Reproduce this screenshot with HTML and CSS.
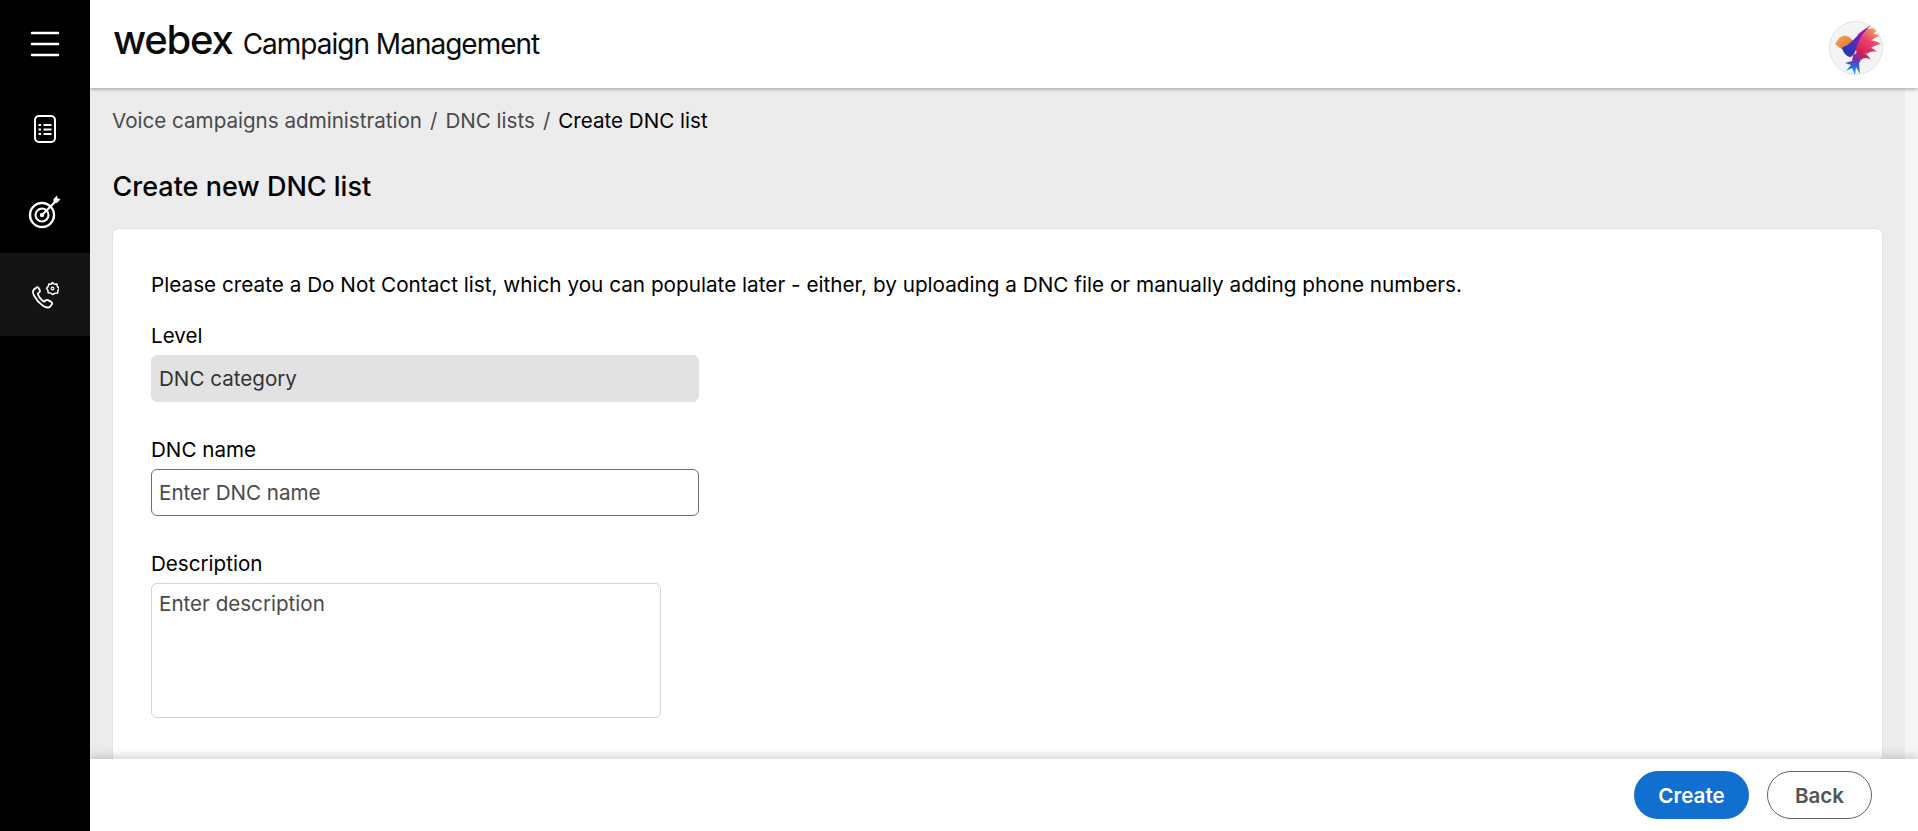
FILE: index.html
```html
<!DOCTYPE html>
<html>
<head>
    <title>Webex Campaign Management</title>
    <link rel="stylesheet" href="styles.css">
</head>
<body>
    <div class="app">
        <nav class="sidebar">
            <div class="nav-item nav-menu">
                <svg width="30" height="28" viewBox="0 0 30 28"><path d="M2 3h26M2 14h26M2 25h26" stroke="#fff" stroke-width="2.500" stroke-linecap="round" fill="none"/></svg>
            </div>
            <div class="nav-item">
                <svg width="24" height="30" viewBox="0 0 24 30" fill="none" stroke="#fff"><rect x="2" y="2" width="20" height="26" rx="4" stroke-width="2"/><path d="M10.500 11h8M10.500 15.500h8M10.500 20h8M5.500 11h2.500M5.500 15.500h2.500M5.500 20h2.500" stroke-width="2"/></svg>
            </div>
            <div class="nav-item">
                <svg width="34" height="34" viewBox="0 0 34 34" fill="none" stroke="#fff"><circle cx="14" cy="20" r="12" stroke-width="2.400"/><circle cx="14" cy="20" r="6.500" stroke-width="2.100"/><path d="M14 20 27 7" stroke-width="2.200"/><path d="M25.500 8V4l3.500-3.500.6 3 3 .6L29 8z" fill="#fff" stroke="none"/><circle cx="14" cy="20" r="2.200" fill="#fff" stroke="none"/></svg>
            </div>
            <div class="nav-item nav-active">
                <svg width="28" height="28" viewBox="0 0 28 28" fill="none" stroke="#fff"><path d="M5.500 6.500 3 8.500c-1.500 1.300-1.300 3.500.3 6.500 2.200 4.200 5 7.300 8.700 9.800 2.700 1.700 5.300 2.300 7 .9l1.800-2.200c.7-1 .4-2-.6-2.600l-3.200-1.800c-1-.5-1.800-.4-2.500.4l-1.200 1.200c-3-1.700-5.300-4.500-6.500-8l1.400-1.300c.7-.7.9-1.500.5-2.500L7.500 7c-.4-1-1.200-1.100-2-.5z" stroke-width="1.800" stroke-linejoin="round"/><path d="m21.500 1.500 1.900 1.700 2.500-.1.500 2.500 1.800 1.700-1.300 2.200-.2 2.500-2.500.2-2.700 1.300-2.100-1.500-2.300-.2-.2-2.500-1.400-2.100 1.800-1.800.5-2.400 2.400.2z" stroke-width="1.500" stroke-linejoin="round"/><circle cx="21.500" cy="7.500" r="1.400" stroke-width="1.200"/></svg>
            </div>
        </nav>
        <div class="main">
            <header class="topbar">
                <div class="brand">
                    <span class="brand-logo">webex</span>
                    <span class="brand-name">Campaign Management</span>
                </div>
                <div class="avatar">
                    <svg width="54" height="54" viewBox="0 0 54 54">
                        <defs>
                            <linearGradient id="stroke" gradientUnits="userSpaceOnUse" x1="16" y1="34" x2="42" y2="5"><stop offset="0" stop-color="#1f3bb0"/><stop offset=".5" stop-color="#5a26c4"/><stop offset="1" stop-color="#b520b4"/></linearGradient>
                            <linearGradient id="head" x1="0" y1="0" x2="1" y2="1"><stop offset="0" stop-color="#f6b04c"/><stop offset="1" stop-color="#e0663a"/></linearGradient>
                            <linearGradient id="feather" gradientUnits="userSpaceOnUse" x1="28" y1="36" x2="48" y2="7"><stop offset="0" stop-color="#c4174c"/><stop offset=".55" stop-color="#ea3f70"/><stop offset="1" stop-color="#f6b24a"/></linearGradient>
                            <linearGradient id="tail" gradientUnits="userSpaceOnUse" x1="28" y1="30" x2="24" y2="53"><stop offset="0" stop-color="#cf1f5a"/><stop offset=".4" stop-color="#6a34b8"/><stop offset=".7" stop-color="#2a6fd0"/><stop offset="1" stop-color="#22a6e4"/></linearGradient>
                            <clipPath id="disc"><circle cx="27" cy="27" r="26.500"/></clipPath>
                        </defs>
                        <circle cx="27" cy="27" r="26.500" fill="#f4f4f6" stroke="#e2e2e2"/>
                        <g clip-path="url(#disc)">
                            <path d="M28 14C34 8 42 6 49 8 46 11 44 13 42 15z" fill="url(#feather)"/>
                            <path d="M30 18C36 12 44 11 50 15 46 16 44 18 42 20z" fill="url(#feather)"/>
                            <path d="M29 24C36 18 44 18 52 23 47 24 44 25 42 27z" fill="url(#feather)"/>
                            <path d="M28 28C35 24 42 25 48 31 43 30 40 31 38 33z" fill="url(#feather)"/>
                            <path d="M27 31C33 29 38 32 42 39 37 36 34 37 32 39z" fill="url(#feather)"/>
                            <path d="M24 20C30 14 36 13 42 15L40 27 30 38z" fill="url(#feather)"/>
                            <path d="M24 34 31 30C33 36 32 40 30 42L31 53 27 46 26 54 23 47 17 50 22 44 16 42 23 40z" fill="url(#tail)"/>
                            <path d="M6 23C8 21 9 16 14 15 18 14 22 17 24 20L20 28 13 28C10 27 8 24 6 23z" fill="url(#head)"/>
                            <path d="M16 25C22 24 28 12 42 4 36 10 31 16 28 24 27 30 25 35 21 36 16 35 14 30 13 27z" fill="url(#stroke)"/>
                        </g>
                    </svg>
                </div>
            </header>
            <div class="body-row">
                <main class="content">
                    <div class="breadcrumb">
                        <span class="crumb">Voice campaigns administration</span>
                        <span class="crumb-sep">/</span>
                        <span class="crumb">DNC lists</span>
                        <span class="crumb-sep">/</span>
                        <span class="crumb-current">Create DNC list</span>
                    </div>
                    <h1 class="page-title">Create new DNC list</h1>
                    <section class="card">
                        <p class="intro">Please create a Do Not Contact list, which you can populate later - either, by uploading a DNC file or manually adding phone numbers.</p>
                        <div class="field">
                            <label class="field-label">Level</label>
                            <div class="input input-disabled">DNC category</div>
                        </div>
                        <div class="field">
                            <label class="field-label">DNC name</label>
                            <div class="input input-text">Enter DNC name</div>
                        </div>
                        <div class="field">
                            <label class="field-label">Description</label>
                            <div class="textarea">Enter description</div>
                        </div>
                    </section>
                </main>
                <div class="scroll-track"></div>
            </div>
            <footer class="footer">
                <button class="btn btn-primary">Create</button>
                <button class="btn btn-secondary">Back</button>
            </footer>
        </div>
    </div>
</body>
</html>
```

FILE: styles.css
```css
* {
    box-sizing: border-box;
}
html, body {
    margin: 0;
    height: 100%;
    overflow: hidden;
}
body {
    font-family: Inter, "Liberation Sans", sans-serif;
    color: #000;
    background: #ececec;
}
.app {
    display: flex;
    height: 831px;
}
.sidebar {
    width: 90px;
    flex-shrink: 0;
    background: #000;
}
.nav-item {
    height: 83px;
    display: flex;
    align-items: center;
    justify-content: center;
}
.nav-menu {
    height: 87px;
}
.nav-active {
    background: #141414;
}
.main {
    flex: 1;
    min-width: 0;
    display: flex;
    flex-direction: column;
}
.topbar {
    height: 88px;
    flex-shrink: 0;
    background: #fff;
    box-shadow: 0 1px 4px rgba(0, 0, 0, 0.35);
    display: flex;
    align-items: center;
    justify-content: space-between;
    padding: 0 35px 0 23px;
    position: relative;
}
.brand {
    display: flex;
    align-items: baseline;
    gap: 10px;
    margin-bottom: 10px;
}
.brand-logo {
    font-size: 40px;
    font-weight: 500;
    letter-spacing: -1.2px;
    color: #0a0a0a;
}
.brand-name {
    font-size: 28px;
    letter-spacing: -1px;
    color: #0a0a0a;
}
.avatar {
    width: 54px;
    height: 54px;
    margin-top: 8px;
}
.body-row {
    flex: 1;
    min-height: 0;
    display: flex;
}
.content {
    flex: 1;
    min-width: 0;
    padding: 0 23px;
    overflow: hidden;
}
.scroll-track {
    width: 13px;
    background: #f6f6f6;
}
.breadcrumb {
    display: flex;
    gap: 8px;
    margin-left: -1px;
    padding-top: 21px;
    font-size: 20.6px;
    line-height: 24px;
    color: #4a4a4a;
}
.crumb-current {
    color: #000;
}
.page-title {
    margin: 38px 0 0 -0.5px;
    font-size: 27px;
    line-height: 32px;
    font-weight: 500;
}
.card {
    margin-top: 26px;
    height: 560px;
    background: #fff;
    border-radius: 6px;
    box-shadow: 0 0 2px rgba(0, 0, 0, 0.12);
    padding: 44px 38px;
}
.intro {
    margin: 0 0 27px;
    font-size: 20.73px;
    line-height: 24px;
}
.field {
    margin-bottom: 36px;
}
.field-label {
    display: block;
    font-size: 20.6px;
    line-height: 24px;
    margin-bottom: 7px;
}
.input {
    width: 548px;
    height: 47px;
    border-radius: 6px;
    padding: 0 7px;
    font-size: 20.6px;
    display: flex;
    align-items: center;
    color: #4a4a4a;
}
.input-disabled {
    background: #e2e2e2;
    border: 1px solid #e2e2e2;
    color: #333;
}
.input-text {
    background: #fff;
    border: 1px solid #6e6e6e;
}
.textarea {
    width: 510px;
    height: 135px;
    border: 1px solid #d4d4d4;
    border-radius: 6px;
    padding: 8px 7px;
    font-size: 20.6px;
    line-height: 24px;
    color: #4a4a4a;
    background: #fff;
}
.footer {
    height: 72px;
    flex-shrink: 0;
    background: #fff;
    box-shadow: 0 -2px 10px rgba(0, 0, 0, 0.2);
    display: flex;
    align-items: center;
    justify-content: flex-end;
    gap: 18px;
    padding: 0 46px 0 0;
    position: relative;
}
.btn {
    height: 48px;
    border-radius: 24px;
    font-family: Inter, "Liberation Sans", sans-serif;
    font-size: 20.6px;
    font-weight: 600;
    cursor: pointer;
}
.btn-primary {
    width: 115px;
    background: #1170cf;
    border: none;
    color: #fff;
}
.btn-secondary {
    width: 105px;
    background: #fff;
    border: 1px solid #636363;
    color: #545454;
}
```
